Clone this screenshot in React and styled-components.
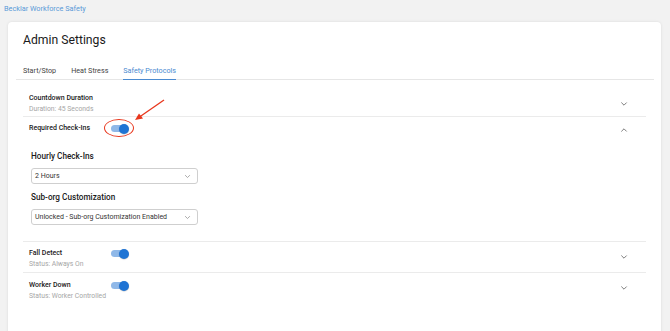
import React, { useState } from 'react';
import styled, { createGlobalStyle } from 'styled-components';

const GlobalStyle = createGlobalStyle`
  body {
    margin: 0;
    background: #f2f2f2;
    font-family: Roboto, "Liberation Sans", sans-serif;
    color: #1f1f1f;
  }
`;

const Page = styled.div`
  width: 670px;
  height: 331px;
  overflow: hidden;
`;

const TopLink = styled.a`
  display: block;
  padding: 3px 0 0 4px;
  height: 12px;
  font-size: 7.3px;
  line-height: 11px;
  color: #5b9ad8;
  text-decoration: none;
`;

const Card = styled.div`
  margin: 7px 0 0 8px;
  width: 653px;
  height: 330px;
  background: #ffffff;
  border-radius: 4px;
  box-shadow: 0 0 3px rgba(0, 0, 0, 0.1);
  padding: 0 7px 0 8px;
  box-sizing: border-box;
`;

const Title = styled.h1`
  margin: 0;
  padding: 11px 0 0 7px;
  font-size: 12.2px;
  line-height: 15px;
  font-weight: 400;
  color: #1a1a1a;
`;

const TabBar = styled.div`
  display: flex;
  gap: 15px;
  margin-top: 18px;
  padding-left: 7px;
  border-bottom: 1px solid #e6e6e6;
`;

const Tab = styled.div`
  font-size: 7.2px;
  line-height: 10px;
  padding-bottom: 3px;
  color: ${p => (p.$active ? '#4a8ad0' : '#444')};
  border-bottom: 1.5px solid ${p => (p.$active ? '#4a8ad0' : 'transparent')};
  margin-bottom: -1px;
`;

const List = styled.div`
  padding: 11px 8px 0 7px;
`;

const Row = styled.div`
  border-bottom: ${p => (p.$last ? 'none' : '1px solid #ebebeb')};
  padding-left: 6px;
`;

const RowHead = styled.div`
  display: flex;
  align-items: center;
  height: ${p => p.$h}px;
`;

const Labels = styled.div`
  width: 82px;
  display: flex;
  flex-direction: column;
  gap: 2px;
  align-self: flex-start;
  padding-top: ${p => p.$pt}px;
`;

const Name = styled.div`
  font-size: 7px;
  line-height: 9px;
  font-weight: 500;
  color: #1a1a1a;
  white-space: nowrap;
`;

const Sub = styled.div`
  font-size: 6.8px;
  line-height: 8px;
  color: #a6a6a6;
  white-space: nowrap;
`;

const Spacer = styled.div`
  flex: 1;
`;

const Chevron = styled.div`
  width: 8px;
  margin-right: 18px;
  display: flex;
  align-items: center;
  justify-content: center;
  color: #777;
`;

const ToggleWrap = styled.div`
  position: relative;
  align-self: flex-start;
  margin-top: ${p => p.$mt}px;
  width: 18px;
  height: 11px;
  display: flex;
  align-items: center;
`;

const Track = styled.div`
  width: 17px;
  height: 7px;
  border-radius: 4px;
  background: #8fb8e8;
`;

const Thumb = styled.div`
  position: absolute;
  right: 0;
  top: 0.5px;
  width: 10px;
  height: 10px;
  border-radius: 50%;
  background: #1f74d4;
  box-shadow: 0 0.5px 1px rgba(0, 0, 0, 0.25);
`;

const Ring = styled.div`
  position: absolute;
  left: -7px;
  top: -4px;
  width: 28px;
  height: 16px;
  border: 1.3px solid #e8361c;
  border-radius: 50%;
`;

const Arrow = styled.svg`
  position: absolute;
  left: 23px;
  top: -23px;
  overflow: visible;
`;

const Body = styled.div`
  padding: 8px 0 16px 2px;
`;

const FieldLabel = styled.div`
  font-size: 8.2px;
  line-height: 10px;
  font-weight: 500;
  color: #1a1a1a;
  margin-bottom: 7px;
`;

const Select = styled.div`
  width: 167px;
  height: 16px;
  box-sizing: border-box;
  border: 1px solid #cfcfcf;
  border-radius: 3px;
  display: flex;
  align-items: center;
  justify-content: space-between;
  padding: 0 6px 0 3px;
  font-size: 7px;
  color: #333;
  margin-bottom: ${p => p.$mb}px;
`;

const Chev = ({ up, size = 8, color = '#777' }) => (
  <svg width={size} height={size} viewBox="0 0 10 10">
    <path
      d={up ? 'M2 6.5 L5 3.5 L8 6.5' : 'M2 3.5 L5 6.5 L8 3.5'}
      fill="none"
      stroke={color}
      strokeWidth="1.2"
      strokeLinecap="round"
      strokeLinejoin="round"
    />
  </svg>
);

const Toggle = ({ mt, marked }) => (
  <ToggleWrap $mt={mt}>
    <Track />
    <Thumb />
    {marked && <Ring />}
    {marked && (
      <Arrow width="32" height="22">
        <line x1="30" y1="0" x2="4" y2="18" stroke="#e8361c" strokeWidth="1.3" />
        <path d="M1 20 L9 18.5 L5 13.5 Z" fill="#e8361c" />
      </Arrow>
    )}
  </ToggleWrap>
);

const App = () => {
  const [open] = useState(true);

  return (
    <Page>
      <GlobalStyle />
      <TopLink href="#">Becklar Workforce Safety</TopLink>
      <Card>
        <Title>Admin Settings</Title>
        <TabBar>
          <Tab>Start/Stop</Tab>
          <Tab>Heat Stress</Tab>
          <Tab $active>Safety Protocols</Tab>
        </TabBar>
        <List>
          <Row>
            <RowHead $h={25}>
              <Labels $pt={3}>
                <Name>Countdown Duration</Name>
                <Sub>Duration: 45 Seconds</Sub>
              </Labels>
              <Spacer />
              <Chevron>
                <Chev />
              </Chevron>
            </RowHead>
          </Row>
          <Row>
            <RowHead $h={26}>
              <Labels $pt={7}>
                <Name>Required Check-Ins</Name>
              </Labels>
              <Toggle mt={6} marked />
              <Spacer />
              <Chevron>
                <Chev up={open} />
              </Chevron>
            </RowHead>
            <Body>
              <FieldLabel>Hourly Check-Ins</FieldLabel>
              <Select $mb={8}>
                2 Hours
                <Chev size={7} color="#999" />
              </Select>
              <FieldLabel>Sub-org Customization</FieldLabel>
              <Select $mb={0}>
                Unlocked - Sub-org Customization Enabled
                <Chev size={7} color="#999" />
              </Select>
            </Body>
          </Row>
          <Row>
            <RowHead $h={30}>
              <Labels $pt={7}>
                <Name>Fall Detect</Name>
                <Sub>Status: Always On</Sub>
              </Labels>
              <Toggle mt={6} />
              <Spacer />
              <Chevron>
                <Chev />
              </Chevron>
            </RowHead>
          </Row>
          <Row $last>
            <RowHead $h={30}>
              <Labels $pt={8}>
                <Name>Worker Down</Name>
                <Sub>Status: Worker Controlled</Sub>
              </Labels>
              <Toggle mt={7} />
              <Spacer />
              <Chevron>
                <Chev />
              </Chevron>
            </RowHead>
          </Row>
        </List>
      </Card>
    </Page>
  );
};

export default App;
